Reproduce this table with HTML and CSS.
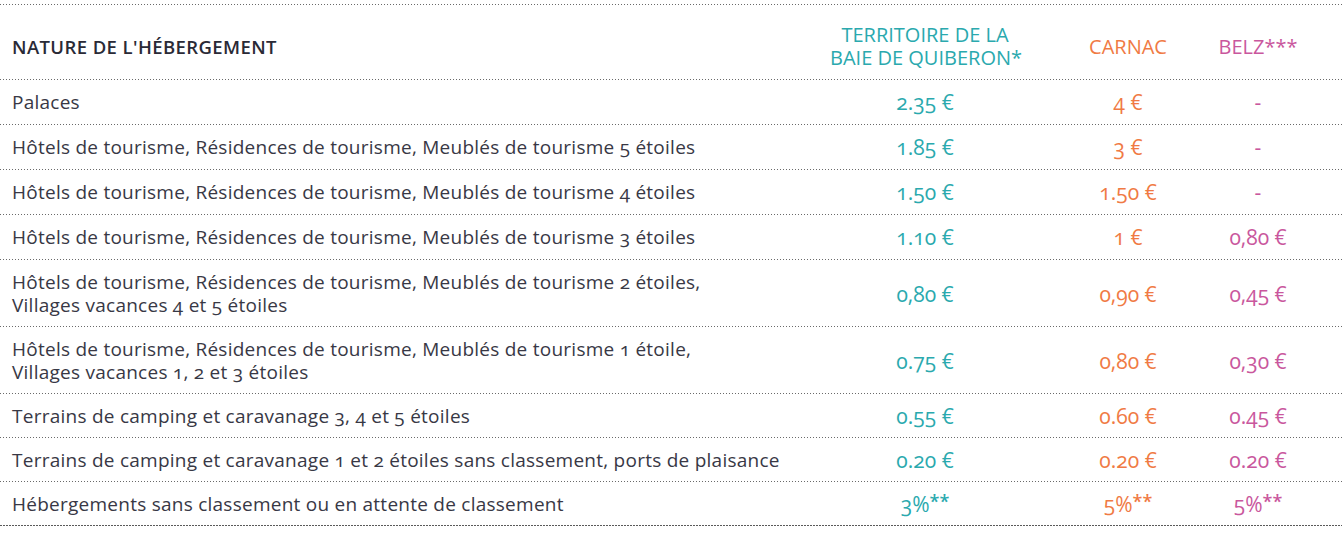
FILE: index.html
```html
<!DOCTYPE html>
<html lang="fr">
<head>
<meta charset="utf-8">
<title>Taxe de séjour</title>
<link rel="stylesheet" href="styles.css">
</head>
<body>
<div class="table">
  <div class="row head">
    <div class="label">NATURE DE L'HÉBERGEMENT</div>
    <div class="val terr">TERRITOIRE DE LA<br>BAIE DE QUIBERON*</div>
    <div class="val carnac">CARNAC</div>
    <div class="val belz">BELZ***</div>
  </div>
  <div class="row tall">
    <div class="label">Palaces</div>
    <div class="val terr">2.35 €</div>
    <div class="val carnac">4 €</div>
    <div class="val belz">-</div>
  </div>
  <div class="row tall">
    <div class="label">Hôtels de tourisme, Résidences de tourisme, Meublés de tourisme 5 étoiles</div>
    <div class="val terr">1.85 €</div>
    <div class="val carnac">3 €</div>
    <div class="val belz">-</div>
  </div>
  <div class="row tall">
    <div class="label">Hôtels de tourisme, Résidences de tourisme, Meublés de tourisme 4 étoiles</div>
    <div class="val terr">1.50 €</div>
    <div class="val carnac">1.50 €</div>
    <div class="val belz">-</div>
  </div>
  <div class="row tall">
    <div class="label">Hôtels de tourisme, Résidences de tourisme, Meublés de tourisme 3 étoiles</div>
    <div class="val terr">1.10 €</div>
    <div class="val carnac">1 €</div>
    <div class="val belz">0,80 €</div>
  </div>
  <div class="row double">
    <div class="label">Hôtels de tourisme, Résidences de tourisme, Meublés de tourisme 2 étoiles,<br>Villages vacances 4 et 5 étoiles</div>
    <div class="val terr">0,80 €</div>
    <div class="val carnac">0,90 €</div>
    <div class="val belz">0,45 €</div>
  </div>
  <div class="row double">
    <div class="label">Hôtels de tourisme, Résidences de tourisme, Meublés de tourisme 1 étoile,<br>Villages vacances 1, 2 et 3 étoiles</div>
    <div class="val terr">0.75 €</div>
    <div class="val carnac">0,80 €</div>
    <div class="val belz">0,30 €</div>
  </div>
  <div class="row">
    <div class="label">Terrains de camping et caravanage 3, 4 et 5 étoiles</div>
    <div class="val terr">0.55 €</div>
    <div class="val carnac">0.60 €</div>
    <div class="val belz">0.45 €</div>
  </div>
  <div class="row">
    <div class="label">Terrains de camping et caravanage 1 et 2 étoiles sans classement, ports de plaisance</div>
    <div class="val terr">0.20 €</div>
    <div class="val carnac">0.20 €</div>
    <div class="val belz">0.20 €</div>
  </div>
  <div class="row last">
    <div class="label">Hébergements sans classement ou en attente de classement</div>
    <div class="val terr">3%<sup>**</sup></div>
    <div class="val carnac">5%<sup>**</sup></div>
    <div class="val belz">5%<sup>**</sup></div>
  </div>
</div>
</body>
</html>
```
FILE: styles.css
```css
html, body {
  margin: 0;
  padding: 0;
  background: #ffffff;
}

body {
  font-family: "Open Sans", "Noto Sans", sans-serif;
  color: #383845;
}

.table {
  padding-top: 4px;
}

.table::before {
  content: "";
  display: block;
  height: 1px;
  background: linear-gradient(to right, #6a6a6a 1px, transparent 1px) 0 0 / 3px 1px repeat-x;
}

.row {
  display: grid;
  grid-template-columns: 1fr 233px 130px 130px;
  padding: 11px 19px 11px 12px;
  align-items: center;
  font-size: 19px;
  line-height: 22px;
  background: linear-gradient(to right, #6a6a6a 1px, transparent 1px) left bottom / 3px 1px repeat-x;
  font-feature-settings: "onum" 1;
}

.row.tall {
  padding-bottom: 12px;
}

.row.double {
  line-height: 23px;
  padding-bottom: 10px;
}

.row.head {
  padding-top: 18px;
  padding-bottom: 11px;
  line-height: 23px;
}

.row.head .label {
  color: #2a2a36;
  font-size: 18.5px;
  font-weight: 600;
  letter-spacing: 0.4px;
}

.row.last {
  background: linear-gradient(to right, #5a5a5a 2px, transparent 2px) left bottom / 3px 1px repeat-x;
}

.label {
  letter-spacing: 0.25px;
}

.val {
  text-align: center;
  font-size: 21px;
  white-space: nowrap;
}

.head .val {
  font-size: 20px;
}

.terr {
  color: #2aa9ae;
  padding-right: 43px;
}

.carnac {
  color: #f07a44;
}

.belz {
  color: #c9579d;
}

sup {
  font-size: 18px;
  line-height: 0;
  vertical-align: 4px;
  font-weight: 600;
}
```
